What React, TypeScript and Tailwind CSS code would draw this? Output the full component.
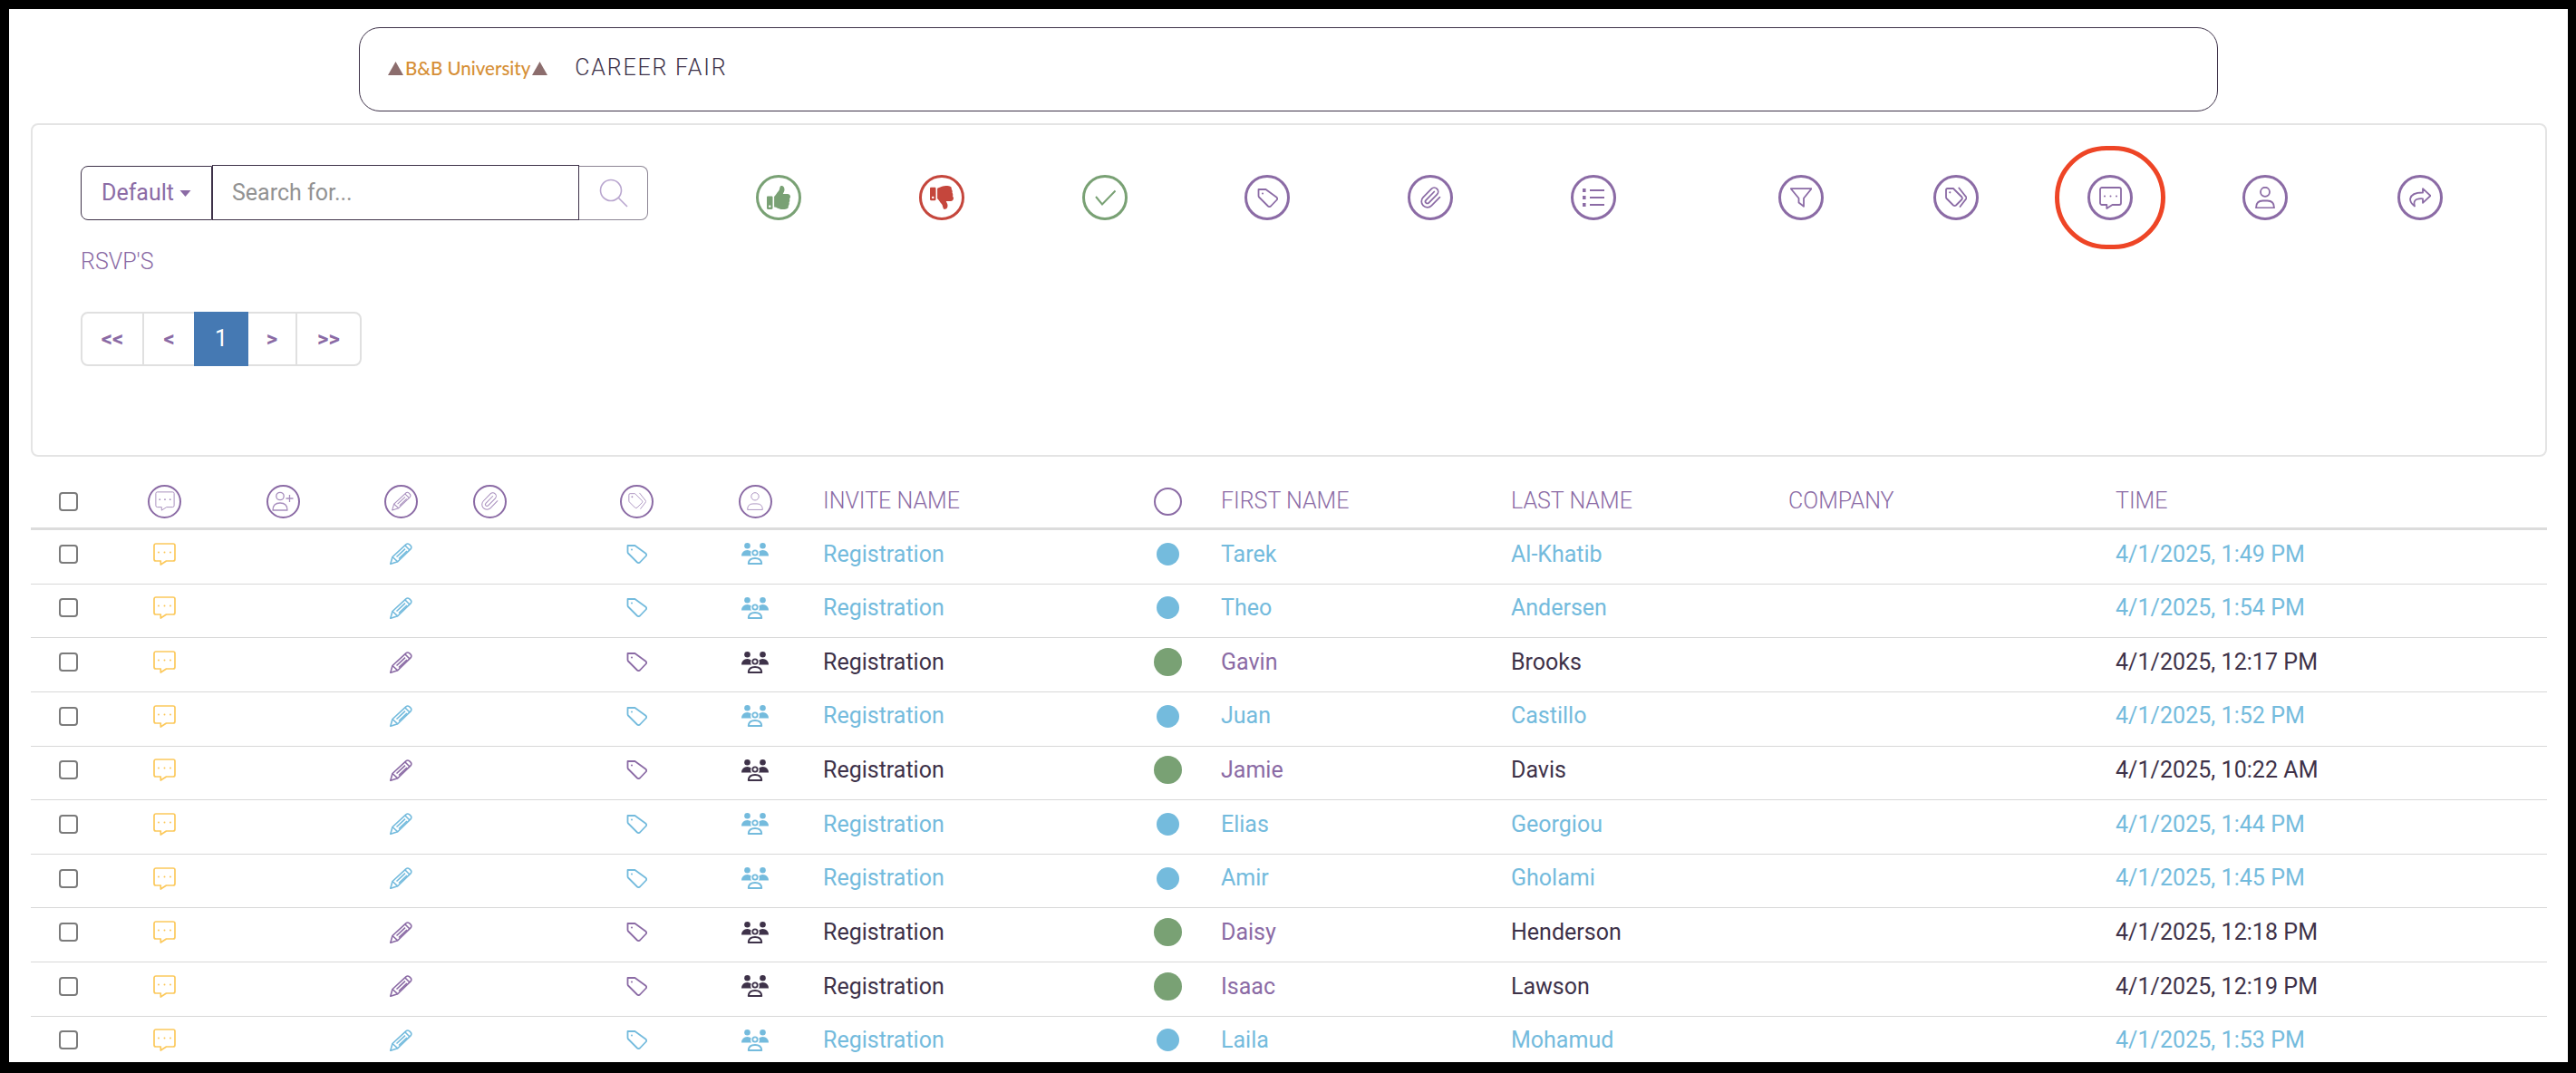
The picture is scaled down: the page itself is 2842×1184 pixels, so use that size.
import React from "react";
import { FaThumbsUp, FaThumbsDown } from "react-icons/fa";

const PURPLE = "text-[#8b6ba5]";
const BLUE = "text-[#74bbdd]";
const DARK = "text-[#3e3249]";

type P = { className?: string; sw?: number };

const Chat = ({ className, sw = 1.7 }: P) => (
  <svg viewBox="0 0 25 25" fill="none" stroke="currentColor" strokeWidth={sw} strokeLinejoin="round" className={className}>
    <path d="M3 1h19a2 2 0 0 1 2 2v15a2 2 0 0 1-2 2H14.500L8.300 24V20H3a2 2 0 0 1-2-2V3a2 2 0 0 1 2-2z" />
    <circle cx="6" cy="10.500" r="1" fill="currentColor" stroke="none" />
    <circle cx="12.500" cy="10.500" r="1" fill="currentColor" stroke="none" />
    <circle cx="19" cy="10.500" r="1" fill="currentColor" stroke="none" />
  </svg>
);

const Pencil = ({ className, sw = 1.6 }: P) => (
  <svg viewBox="0 0 25 24" fill="none" stroke="currentColor" strokeWidth={sw} strokeLinejoin="round" className={className}>
    <path d="M.800 23.300L3 15.500 17.800 1.800q1.900-1.500 3.700-.2l1.700 1.700q1.300 1.900-.2 3.600L8.800 20.800z" />
    <path d="M3 15.500l5.800 5.300M17 3l5 5M7.500 15.500l9.500-8.800" />
    <path d="M10 17.500l9-8.500" />
  </svg>
);

const Tag = ({ className, sw = 1.8 }: P) => (
  <svg viewBox="0 0 23 21" fill="none" stroke="currentColor" strokeWidth={sw} strokeLinejoin="round" className={className}>
    <path d="M1.500 1H9.500L21.500 9.800q1.300 1.200.2 2.700L15 19.500q-1.500 1.200-3 0L2 9.500q-.5-.5-.5-1.500z" />
    <circle cx="6" cy="5.500" r="1" fill="currentColor" stroke="none" />
  </svg>
);

const Group = ({ className }: P) => (
  <svg viewBox="0 0 32 24" className={className} fill="currentColor">
    <circle cx="7.500" cy="3.300" r="3.300" />
    <circle cx="24.500" cy="3.300" r="3.300" />
    <path d="M1 14.500Q1.500 8 7.500 8q2.800 0 4.300 1.800-1 1.500-.6 3.200.2.900 1 1.500z" />
    <path d="M31 14.500Q30.500 8 24.500 8q-2.800 0-4.300 1.800 1 1.500.6 3.200-.2.900-1 1.500z" />
    <circle cx="16" cy="11" r="2.700" fill="none" stroke="currentColor" strokeWidth="1.800" />
    <path d="M8.800 23Q9 17 16 17t7.200 6z" fill="none" stroke="currentColor" strokeWidth="2" strokeLinejoin="round" />
  </svg>
);

const Clip = ({ className, sw = 1.5 }: P) => (
  <svg viewBox="0 0 24 24" fill="none" stroke="currentColor" strokeWidth={sw} strokeLinecap="round" strokeLinejoin="round" className={className}>
    <path d="m16 6-8.414 8.586a2 2 0 0 0 2.829 2.828l8.414-8.586a4 4 0 1 0-5.657-5.657l-8.379 8.551a6 6 0 1 0 8.485 8.485l8.379-8.551" />
  </svg>
);

const ListIcon = ({ className }: P) => (
  <svg viewBox="0 0 24 24" fill="none" stroke="currentColor" strokeWidth="1.800" className={className}>
    <path d="M8 4h16M8 12h16M8 20h16" />
    <path d="M1.800 2v4M1.800 10v4M1.800 18v4" strokeWidth="3.500" />
  </svg>
);

const FilterIcon = ({ className }: P) => (
  <svg viewBox="0 0 24 24" fill="none" stroke="currentColor" strokeWidth="1.800" strokeLinejoin="round" strokeLinecap="round" className={className}>
    <path d="M.800 2.200H23.500L15 12.700V21.800L9.500 17.500V12.700z" />
  </svg>
);

const Tags = ({ className, sw = 1.800 }: P) => (
  <svg viewBox="0 0 24 24" fill="none" stroke="currentColor" strokeWidth={sw} strokeLinejoin="round" strokeLinecap="round" className={className}>
    <path d="M1 3.500Q1 2 2.500 2H9L18.500 11.500Q19.500 12.700 18.500 14L12 20.500Q10.500 21.700 9 20.500L1.500 13Q1 12.500 1 11.500Z" />
    <path d="M15.300 1.500L23.400 11.700q.3.700 0 1.300L16.500 22" />
    <circle cx="5.300" cy="6.300" r="1.100" fill="currentColor" stroke="none" />
  </svg>
);

const Person = ({ className, sw = 1.800 }: P) => (
  <svg viewBox="0 0 24 24" fill="none" stroke="currentColor" strokeWidth={sw} strokeLinejoin="round" className={className}>
    <circle cx="12" cy="5.800" r="5" />
    <path d="M2 23.300q0-7.800 7.500-7.800h5q7.500 0 7.500 7.800z" />
  </svg>
);

const PersonPlus = ({ className }: P) => (
  <svg viewBox="0 0 24 22" fill="none" stroke="currentColor" strokeWidth="1.300" strokeLinejoin="round" className={className}>
    <circle cx="9" cy="5.500" r="4.200" />
    <path d="M1 21q0-8 8-8t8 8z" />
    <path d="M15.500 8h8M19.500 4v8" />
  </svg>
);

const Share = ({ className }: P) => (
  <svg viewBox="0 0 24 24" fill="none" stroke="currentColor" strokeWidth="1.800" strokeLinejoin="round" strokeLinecap="round" className={className}>
    <path d="M15 2.200L23.500 10 15 17.800V13.300Q8.500 12.800 6.300 15.500 4.800 17.500 6 21.500 .500 17.500 1.200 13 3 6.300 15 6.500z" />
  </svg>
);

const Search = ({ className }: P) => (
  <svg viewBox="0 0 32 32" fill="none" stroke="currentColor" strokeWidth="1.600" className={className}>
    <circle cx="13" cy="13" r="11.500" />
    <path d="M21.500 21.500L31 31" />
  </svg>
);

const Ring = ({ color = "border-[#8b6ba5]", children }: { color?: string; children: React.ReactNode }) => (
  <div className={`flex h-[50px] w-[50px] shrink-0 items-center justify-center rounded-full border-[3px] ${color}`}>{children}</div>
);

const HeadRing = ({ children }: { children: React.ReactNode }) => (
  <div className="flex h-[37px] w-[37px] items-center justify-center rounded-full border-[2.5px] border-[#8b6ba5] text-[#a78ebd]">{children}</div>
);

const GRID =
  "grid grid-cols-[82px_131px_130px_131px_64px_68px_125px_136px_356px_62px_348px_306px_361px_476px] items-center";

const rows: [string, string, string, boolean][] = [
  ["Tarek", "Al-Khatib", "4/1/2025, 1:49 PM", true],
  ["Theo", "Andersen", "4/1/2025, 1:54 PM", true],
  ["Gavin", "Brooks", "4/1/2025, 12:17 PM", false],
  ["Juan", "Castillo", "4/1/2025, 1:52 PM", true],
  ["Jamie", "Davis", "4/1/2025, 10:22 AM", false],
  ["Elias", "Georgiou", "4/1/2025, 1:44 PM", true],
  ["Amir", "Gholami", "4/1/2025, 1:45 PM", true],
  ["Daisy", "Henderson", "4/1/2025, 12:18 PM", false],
  ["Isaac", "Lawson", "4/1/2025, 12:19 PM", false],
  ["Laila", "Mohamud", "4/1/2025, 1:53 PM", true],
];

const Check = () => (
  <input type="checkbox" className="h-[21px] w-[21px] appearance-none rounded-[4px] border-2 border-[#7b7b7b] bg-white" />
);

const Cell = ({ children }: { children?: React.ReactNode }) => <div className="flex items-center justify-center">{children}</div>;

const Triangle = () => (
  <svg viewBox="0 0 17 15" className="h-[15px] w-[17px] text-[#8c6d6d]" fill="currentColor"><path d="M8.500 0L17 15H0z" /></svg>
);

export default function App() {
  return (
    <div className="h-[1184px] w-[2842px] overflow-hidden bg-black pb-[12px] pl-[10px] pr-[9px] pt-[10px] font-[Roboto,sans-serif]">
      <div className="h-full w-full overflow-hidden bg-white pl-[24px] pt-[20px]">
        {/* Title bar */}
        <div className="ml-[362px] flex h-[93px] w-[2051px] items-center rounded-[23px] border-[1.5px] border-[#3e3249] pb-[3px] pl-[31px]">
          <Triangle />
          <span className="mx-[2px] font-[Lato,sans-serif] text-[20.500px] font-medium text-[#d68f36]">B&amp;B University</span>
          <Triangle />
          <span className={`ml-[30px] text-[25px] font-light tracking-[1.800px] ${DARK}`}>CAREER FAIR</span>
        </div>

        {/* Filter card */}
        <div className="mt-[13px] flex h-[368px] w-[2776px] rounded-[8px] border-2 border-[#e4e4e4] pl-[53px] pt-[44px]">
          <div className="w-[626px] shrink-0">
            <div className="flex h-[61px] items-center">
              <div className={`flex h-[60px] w-[145px] items-center justify-center gap-[6px] rounded-l-[8px] border-[1.5px] border-[#3e3249] text-[25px] ${PURPLE}`}>
                Default
                <svg viewBox="0 0 12 7" className="mt-[2px] h-[7px] w-[13px]" fill="currentColor"><path d="M0 0h12L6 7z" /></svg>
              </div>
              <div className="flex h-[61px] w-[405px] items-center border-[1.5px] border-[#3e3249] pl-[21px] text-[25px] text-[#929292]">Search for...</div>
              <div className="flex h-[60px] w-[76px] items-center justify-center rounded-r-[8px] border-[1.5px] border-l-0 border-[#8d8695] text-[#b9a6cf]">
                <Search className="h-[32px] w-[32px]" />
              </div>
            </div>
            <div className={`mt-[31px] text-[25px] font-light leading-[30px] ${PURPLE}`}>RSVP'S</div>
            <div className={`mt-[40px] flex h-[60px] w-[310px] items-stretch rounded-[8px] border-2 border-[#e0e0e0] text-[24px] font-bold ${PURPLE}`}>
              <div className="flex w-[68px] items-center justify-center border-r-2 border-[#e0e0e0]">&lt;&lt;</div>
              <div className="flex w-[55px] items-center justify-center">&lt;</div>
              <div className="-my-[2px] flex w-[60px] items-center justify-center bg-[#4579b3] text-[25px] font-normal text-white">1</div>
              <div className="flex w-[54px] items-center justify-center border-r-2 border-[#e0e0e0]">&gt;</div>
              <div className="flex flex-1 items-center justify-center">&gt;&gt;</div>
            </div>
          </div>

          <div className="ml-[119px] mt-[11px] flex h-[50px] gap-[129.750px]">
            <Ring color="border-[#79a174]"><FaThumbsUp className="h-[26px] w-[26px] text-[#79a174]" /></Ring>
            <Ring color="border-[#c5463c]"><FaThumbsDown className="h-[26px] w-[26px] text-[#c5463c]" /></Ring>
            <Ring color="border-[#79a174]">
              <svg viewBox="0 0 24 24" fill="none" stroke="currentColor" strokeWidth="2" className="h-[24px] w-[24px] text-[#79a174]"><path d="M2 11l7 8.500L23.500 4.500" /></svg>
            </Ring>
            <Ring><Tag className={`h-[21px] w-[23px] ${PURPLE}`} /></Ring>
            <Ring><Clip className={`h-[26px] w-[26px] ${PURPLE}`} sw={1.600} /></Ring>
            <Ring><ListIcon className={`h-[24px] w-[24px] ${PURPLE}`} /></Ring>
          </div>
          <div className={`ml-[179px] mt-[11px] flex h-[50px] gap-[120.750px] ${PURPLE}`}>
            <Ring><FilterIcon className="h-[24px] w-[24px]" /></Ring>
            <Ring><Tags className="h-[24px] w-[24px]" /></Ring>
            <div className="relative">
              <Ring><Chat className="h-[25px] w-[25px]" sw={1.800} /></Ring>
              <div className="absolute left-1/2 top-1/2 h-[114px] w-[122px] -translate-x-1/2 -translate-y-1/2 rounded-full border-[5px] border-[#ee4526]" />
            </div>
            <Ring><Person className="h-[24px] w-[24px]" /></Ring>
            <Ring><Share className="h-[24px] w-[24px]" /></Ring>
          </div>
        </div>

        {/* Table header */}
        <div className={`${GRID} h-[81px] w-[2776px] border-b-[3px] border-[#dcdcdc] pt-[20px] text-[25px] font-light ${PURPLE}`}>
          <Cell><Check /></Cell>
          <Cell><HeadRing><Chat className="h-[22px] w-[22px]" sw={1.100} /></HeadRing></Cell>
          <Cell><HeadRing><PersonPlus className="h-[24px] w-[24px]" /></HeadRing></Cell>
          <Cell><HeadRing><Pencil className="h-[22px] w-[22px]" sw={1.200} /></HeadRing></Cell>
          <Cell><HeadRing><Clip className="h-[22px] w-[22px]" sw={1.100} /></HeadRing></Cell>
          <div />
          <Cell><HeadRing><Tags className="h-[20px] w-[20px]" sw={1.100} /></HeadRing></Cell>
          <Cell><HeadRing><Person className="h-[20px] w-[20px]" sw={1.100} /></HeadRing></Cell>
          <div className="pl-[7px]">INVITE NAME</div>
          <Cell><div className="h-[31px] w-[31px] rounded-full border-2 border-[#8b6ba5]" /></Cell>
          <div className="pl-[28px]">FIRST NAME</div>
          <div>LAST NAME</div>
          <div>COMPANY</div>
          <div>TIME</div>
        </div>

        {/* Table rows */}
        {rows.map(([first, last, time, isBlue]) => {
          const main = isBlue ? BLUE : DARK;
          const icon = isBlue ? BLUE : PURPLE;
          return (
            <div key={first} className={`${GRID} h-[59.625px] w-[2776px] border-b border-[#d8d8d8] pb-[6px] text-[25px] ${main}`}>
              <Cell><Check /></Cell>
              <Cell><Chat className="h-[25px] w-[25px] text-[#fcc95c]" /></Cell>
              <div />
              <Cell><Pencil className={`h-[24px] w-[25px] ${icon}`} /></Cell>
              <div />
              <div />
              <Cell><Tag className={`h-[21px] w-[23px] ${icon}`} /></Cell>
              <Cell><Group className={`h-[24px] w-[32px] ${main}`} /></Cell>
              <div className="pl-[7px]">Registration</div>
              <Cell>
                {isBlue ? (
                  <div className="h-[25px] w-[25px] rounded-full bg-[#74bbdd]" />
                ) : (
                  <div className="h-[31px] w-[31px] rounded-full bg-[#79a174]" />
                )}
              </Cell>
              <div className={`pl-[28px] ${isBlue ? BLUE : PURPLE}`}>{first}</div>
              <div>{last}</div>
              <div />
              <div className="tracking-[0.050px]">{time}</div>
            </div>
          );
        })}
      </div>
    </div>
  );
}
